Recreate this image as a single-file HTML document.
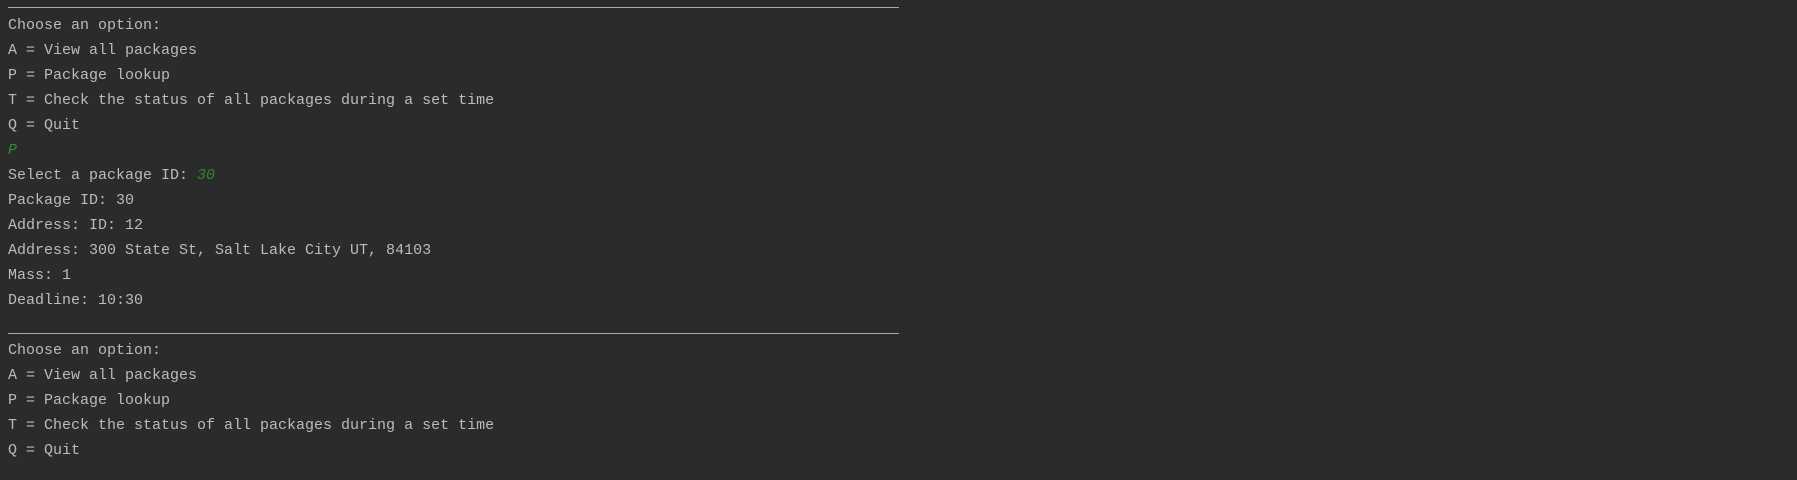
<!DOCTYPE html>
<html><head><style>
html,body{margin:0;padding:0;background:#2b2b2b;width:1797px;height:480px;overflow:hidden}
pre{position:absolute;left:8px;top:13px;margin:0;font-family:"Liberation Mono",monospace;font-size:15px;line-height:25px;color:#bbbbbb}
.g{color:#2e8b2e;font-style:italic}
.r{position:absolute;left:8px;width:891px;height:1px;background:#a9a9a9}
</style></head><body>
<div class="r" style="top:7px"></div>
<div class="r" style="top:333px"></div>
<pre>Choose an option:
A = View all packages
P = Package lookup
T = Check the status of all packages during a set time
Q = Quit
<span class="g">P</span>
Select a package ID: <span class="g">30</span>
Package ID: 30
Address: ID: 12
Address: 300 State St, Salt Lake City UT, 84103
Mass: 1
Deadline: 10:30

Choose an option:
A = View all packages
P = Package lookup
T = Check the status of all packages during a set time
Q = Quit</pre>
</body></html>
